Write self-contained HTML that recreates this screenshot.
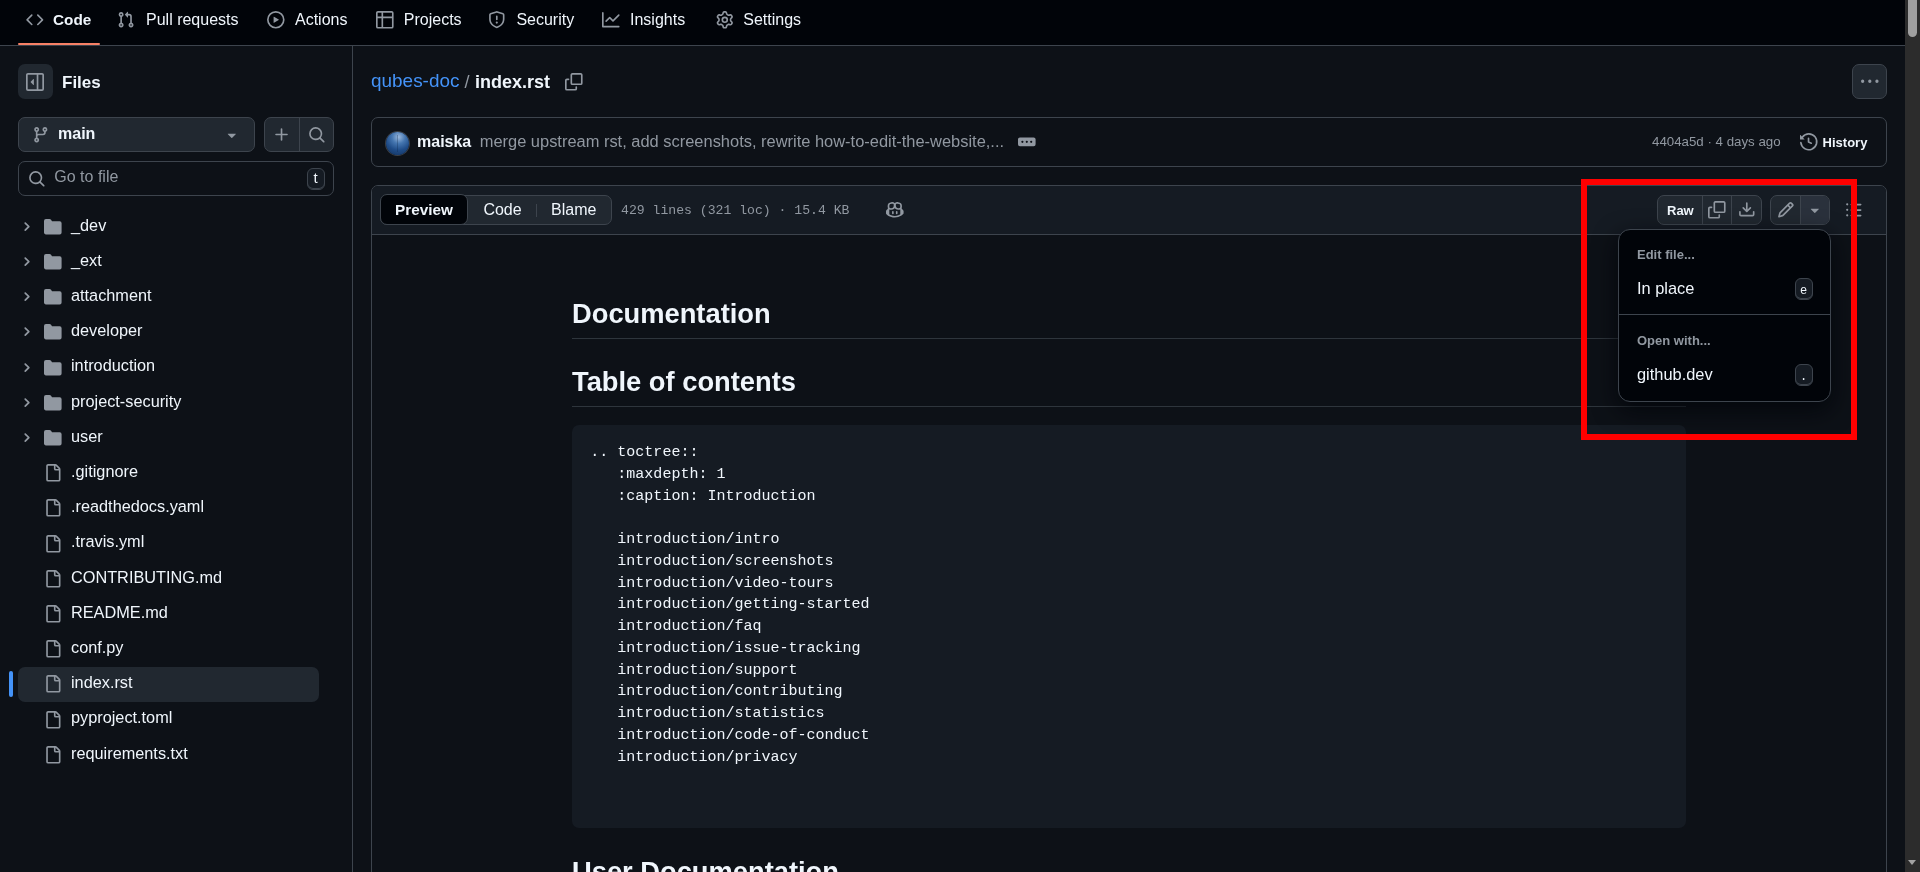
<!DOCTYPE html>
<html><head><meta charset="utf-8">
<style>
*{box-sizing:border-box;margin:0;padding:0}
html,body{width:1920px;height:872px;overflow:hidden;background:#0d1117;will-change:transform;font-family:"Liberation Sans",sans-serif;color:#f0f6fc}
.a{position:absolute}
.t{position:absolute;white-space:pre;line-height:1}
svg{position:absolute;fill:currentColor;overflow:visible}
.mono{font-family:"Liberation Mono",monospace}
#hdr{position:absolute;left:0;top:0;width:1905px;height:46px;background:#010409;border-bottom:1px solid #3d444d}
.nav{color:#f0f6fc;font-size:16px}
.ico{color:#9198a1}
.btn{position:absolute;background:#212830;border:1px solid #3d444d;border-radius:7px}
.sb{position:absolute;left:352px;top:46px;width:1px;height:826px;background:#3d444d}
.row .t{font-size:16px}
#scroll{position:absolute;left:1905px;top:0;width:15px;height:872px;background:#2c2c2c}
</style></head><body>
<div id="hdr">
  <svg class="ico" style="left:25.7px;top:10.6px" width="17.6" height="17.6" viewBox="0 0 16 16"><path d="M4.72 3.22a.75.75 0 0 1 1.06 1.06L2.06 8l3.72 3.72a.75.75 0 1 1-1.06 1.06L.47 8.53a.75.75 0 0 1 0-1.06Zm6.56 0a.75.75 0 1 0-1.06 1.06L13.94 8l-3.72 3.72a.75.75 0 1 0 1.06 1.06l4.25-4.25a.75.75 0 0 0 0-1.06Z"/></svg>
  <div class="t nav" style="left:53px;top:12.1px;font-size:15.3px;font-weight:700">Code</div>
  <div class="a" style="left:18px;top:43px;width:82px;height:2px;background:#f78166;border-radius:2px"></div>
  <svg class="ico" style="left:117px;top:10.6px" width="17.6" height="17.6" viewBox="0 0 16 16"><path d="M1.5 3.25a2.25 2.25 0 1 1 3 2.122v5.256a2.251 2.251 0 1 1-1.5 0V5.372A2.25 2.25 0 0 1 1.5 3.25Zm5.677-.177L9.573.677A.25.25 0 0 1 10 .854V2.5h1A2.5 2.5 0 0 1 13.5 5v5.628a2.251 2.251 0 1 1-1.5 0V5a1 1 0 0 0-1-1h-1v1.646a.25.25 0 0 1-.427.177L7.177 3.427a.25.25 0 0 1 0-.354ZM3.75 2.5a.75.75 0 1 0 0 1.5.75.75 0 0 0 0-1.5Zm0 9.5a.75.75 0 1 0 0 1.5.75.75 0 0 0 0-1.5Zm8.25.75a.75.75 0 1 0 1.5 0 .75.75 0 0 0-1.5 0Z"/></svg>
  <div class="t nav" style="left:146px;top:11.5px">Pull requests</div>
  <svg class="ico" style="left:266.7px;top:10.6px" width="17.6" height="17.6" viewBox="0 0 16 16"><path d="M8 0a8 8 0 1 1 0 16A8 8 0 0 1 8 0ZM1.5 8a6.5 6.5 0 1 0 13 0 6.5 6.5 0 0 0-13 0Zm4.879-2.773 4.264 2.559a.25.25 0 0 1 0 .428l-4.264 2.559A.25.25 0 0 1 6 10.559V5.442a.25.25 0 0 1 .379-.215Z"/></svg>
  <div class="t nav" style="left:295px;top:11.5px">Actions</div>
  <svg class="ico" style="left:375.8px;top:10.6px" width="17.6" height="17.6" viewBox="0 0 16 16"><path d="M0 1.75C0 .784.784 0 1.75 0h12.5C15.216 0 16 .784 16 1.75v12.5A1.75 1.75 0 0 1 14.25 16H1.75A1.75 1.75 0 0 1 0 14.25ZM6.5 6.5v8h7.75a.25.25 0 0 0 .25-.25V6.5Zm8-1.5V1.75a.25.25 0 0 0-.25-.25H6.5V5Zm-13 1.5v7.75c0 .138.112.25.25.25H5v-8ZM5 5V1.5H1.75a.25.25 0 0 0-.25.25V5Z"/></svg>
  <div class="t nav" style="left:403.8px;top:11.5px">Projects</div>
  <svg class="ico" style="left:488.3px;top:10.6px" width="17.6" height="17.6" viewBox="0 0 16 16"><path d="M7.467.133a1.748 1.748 0 0 1 1.066 0l5.25 1.68A1.75 1.75 0 0 1 15 3.48V7c0 1.566-.32 3.182-1.303 4.682-.983 1.498-2.585 2.813-5.032 3.855a1.697 1.697 0 0 1-1.33 0c-2.447-1.042-4.049-2.357-5.032-3.855C1.32 10.182 1 8.566 1 7V3.48a1.755 1.755 0 0 1 1.217-1.667Zm.61 1.429a.25.25 0 0 0-.153 0l-5.25 1.68a.25.25 0 0 0-.174.238V7c0 1.358.275 2.666 1.057 3.86.784 1.194 2.121 2.34 4.366 3.297a.196.196 0 0 0 .154 0c2.245-.956 3.582-2.104 4.366-3.298C13.225 9.666 13.5 8.36 13.5 7V3.48a.251.251 0 0 0-.174-.237l-5.25-1.68ZM8.75 4.75v3a.75.75 0 0 1-1.5 0v-3a.75.75 0 0 1 1.5 0ZM9 10.5a1 1 0 1 1-2 0 1 1 0 0 1 2 0Z"/></svg>
  <div class="t nav" style="left:516.4px;top:11.5px">Security</div>
  <svg class="ico" style="left:602px;top:10.6px" width="17.6" height="17.6" viewBox="0 0 16 16"><path d="M1.5 1.75V13.5h13.75a.75.75 0 0 1 0 1.5H.75a.75.75 0 0 1-.75-.75V1.75a.75.75 0 0 1 1.5 0Zm14.28 2.53-5.25 5.25a.75.75 0 0 1-1.06 0L7 7.06 4.28 9.78a.751.751 0 0 1-1.042-.018.751.751 0 0 1-.018-1.042l3.25-3.25a.75.75 0 0 1 1.06 0L10 7.94l4.72-4.72a.751.751 0 0 1 1.042.018.751.751 0 0 1 .018 1.042Z"/></svg>
  <div class="t nav" style="left:630px;top:11.5px">Insights</div>
  <svg class="ico" style="left:715.6px;top:10.6px" width="17.6" height="17.6" viewBox="0 0 16 16"><path d="M8 0a8.2 8.2 0 0 1 .701.031C9.444.095 9.99.645 10.16 1.29l.288 1.107c.018.066.079.158.212.224.231.114.454.243.668.386.123.082.233.09.299.071l1.103-.303c.644-.176 1.392.021 1.82.63.27.385.506.792.704 1.218.315.675.111 1.422-.364 1.891l-.814.806c-.049.048-.098.147-.088.294.016.257.016.515 0 .772-.01.147.038.246.088.294l.814.806c.475.469.679 1.216.364 1.891a7.977 7.977 0 0 1-.704 1.217c-.428.61-1.176.807-1.82.63l-1.102-.302c-.067-.019-.177-.011-.3.071a5.909 5.909 0 0 1-.668.386c-.133.066-.194.158-.211.224l-.29 1.106c-.168.646-.715 1.196-1.458 1.26a8.006 8.006 0 0 1-1.402 0c-.743-.064-1.289-.614-1.458-1.26l-.289-1.106c-.018-.066-.079-.158-.212-.224a5.738 5.738 0 0 1-.668-.386c-.123-.082-.233-.09-.299-.071l-1.103.303c-.644.176-1.392-.021-1.820-.630a8.12 8.12 0 0 1-.704-1.218c-.315-.675-.111-1.422.363-1.891l.815-.806c.05-.048.098-.147.088-.294a6.214 6.214 0 0 1 0-.772c.01-.147-.038-.246-.088-.294l-.815-.806C.635 6.045.431 5.298.746 4.623a7.92 7.92 0 0 1 .704-1.217c.428-.61 1.176-.807 1.820-.630l1.102.302c.067.019.177.011.3-.071.214-.143.437-.272.668-.386.133-.066.194-.158.211-.224l.29-1.106C6.009.645 6.556.095 7.299.03 7.53.01 7.764 0 8 0Zm-.571 1.525c-.036.003-.108.036-.137.146l-.289 1.105c-.147.561-.549.967-.998 1.189-.173.086-.34.183-.5.29-.417.278-.97.423-1.529.27l-1.103-.303c-.109-.03-.175.016-.195.045-.22.312-.412.644-.573.99-.014.031-.021.11.059.19l.815.806c.411.406.562.957.53 1.456a4.709 4.709 0 0 0 0 .582c.032.499-.119 1.05-.53 1.456l-.815.806c-.081.08-.073.159-.059.19.162.346.353.677.573.989.02.03.085.076.195.046l1.102-.303c.56-.153 1.113-.008 1.530.270.161.107.328.204.501.29.447.222.85.629.997 1.189l.289 1.105c.029.109.101.143.137.146a6.6 6.6 0 0 0 1.142 0c.036-.003.108-.036.137-.146l.289-1.105c.147-.561.549-.967.998-1.189.173-.086.34-.183.5-.29.417-.278.97-.423 1.529-.27l1.103.303c.109.029.175-.016.195-.045.22-.313.411-.644.573-.99.014-.031.021-.11-.059-.19l-.815-.806c-.411-.406-.562-.957-.53-1.456a4.709 4.709 0 0 0 0-.582c-.032-.499.119-1.05.53-1.456l.815-.806c.081-.08.073-.159.059-.19a6.464 6.464 0 0 0-.573-.989c-.02-.03-.085-.076-.195-.046l-1.102.303c-.56.153-1.113.008-1.530-.270a4.44 4.44 0 0 0-.501-.29c-.447-.222-.85-.629-.997-1.189l-.289-1.105c-.029-.11-.101-.143-.137-.146a6.6 6.6 0 0 0-1.142 0ZM11 8a3 3 0 1 1-6 0 3 3 0 0 1 6 0ZM9.5 8a1.5 1.5 0 1 0-3.001.001A1.5 1.5 0 0 0 9.5 8Z"/></svg>
  <div class="t nav" style="left:743.3px;top:11.5px">Settings</div>
</div>
<div class="sb"></div>
<!--SIDEBAR-->
<div class="a" style="left:18px;top:64px;width:35px;height:35px;background:#212830;border-radius:7px"></div>
<svg class="ico" style="left:26px;top:72.6px" width="18" height="18" viewBox="0 0 16 16"><path d="M4.177 7.823l2.396-2.396A.25.25 0 0 1 7 5.604v4.792a.25.25 0 0 1-.427.177L4.177 8.177a.25.25 0 0 1 0-.354Z M1.75 0h12.5C15.216 0 16 .784 16 1.75v12.5A1.75 1.75 0 0 1 14.25 16H1.75A1.75 1.75 0 0 1 0 14.25V1.75C0 .784.784 0 1.75 0ZM1.5 1.75v12.5c0 .138.112.25.25.25H9.5v-13H1.75a.25.25 0 0 0-.25.25ZM11 14.5h3.25a.25.25 0 0 0 .25-.25V1.75a.25.25 0 0 0-.25-.25H11Z"/></svg>
<div class="t" style="left:62px;top:74.1px;font-size:17px;font-weight:700">Files</div>
<div class="btn" style="left:18px;top:117px;width:237px;height:35px"></div>
<svg class="ico" style="left:31.6px;top:125.8px" width="17.6" height="17.6" viewBox="0 0 16 16"><path d="M9.5 3.25a2.25 2.25 0 1 1 3 2.122V6A2.5 2.5 0 0 1 10 8.5H6a1 1 0 0 0-1 1v1.128a2.251 2.251 0 1 1-1.5 0V5.372a2.25 2.25 0 1 1 1.5 0v1.836A2.493 2.493 0 0 1 6 7h4a1 1 0 0 0 1-1v-.628A2.25 2.25 0 0 1 9.5 3.25Zm-6 0a.75.75 0 1 0 1.5 0 .75.75 0 0 0-1.5 0Zm8.25-.75a.75.75 0 1 0 0 1.5.75.75 0 0 0 0-1.5ZM4.25 12a.75.75 0 1 0 0 1.5.75.75 0 0 0 0-1.5Z"/></svg>
<div class="t" style="left:58px;top:125.5px;font-size:16px;font-weight:700">main</div>
<svg class="ico" style="left:222.8px;top:125.8px" width="17.6" height="17.6" viewBox="0 0 16 16"><path d="m4.427 7.427 3.396 3.396a.25.25 0 0 0 .354 0l3.396-3.396A.25.25 0 0 0 11.396 7H4.604a.25.25 0 0 0-.177.427Z"/></svg>
<div class="btn" style="left:264px;top:117px;width:70px;height:35px"></div>
<div class="a" style="left:299px;top:118px;width:1px;height:33px;background:#3d444d"></div>
<svg class="ico" style="left:273px;top:125.8px" width="17.6" height="17.6" viewBox="0 0 16 16"><path d="M7.75 2a.75.75 0 0 1 .75.75V7h4.25a.75.75 0 0 1 0 1.5H8.5v4.25a.75.75 0 0 1-1.5 0V8.5H2.75a.75.75 0 0 1 0-1.5H7V2.75A.75.75 0 0 1 7.75 2Z"/></svg>
<svg class="ico" style="left:308.4px;top:125.8px" width="17.6" height="17.6" viewBox="0 0 16 16"><path d="M10.68 11.74a6 6 0 0 1-7.922-8.982 6 6 0 0 1 8.982 7.922l3.04 3.04a.749.749 0 0 1-.326 1.275.749.749 0 0 1-.734-.215ZM11.5 7a4.499 4.499 0 1 0-8.997 0A4.499 4.499 0 0 0 11.5 7Z"/></svg>
<div class="a" style="left:18px;top:161px;width:316px;height:35px;border:1px solid #3d444d;border-radius:7px;background:#0d1117"></div>
<svg class="ico" style="left:27.6px;top:170px" width="17.6" height="17.6" viewBox="0 0 16 16"><path d="M10.68 11.74a6 6 0 0 1-7.922-8.982 6 6 0 0 1 8.982 7.922l3.04 3.04a.749.749 0 0 1-.326 1.275.749.749 0 0 1-.734-.215ZM11.5 7a4.499 4.499 0 1 0-8.997 0A4.499 4.499 0 0 0 11.5 7Z"/></svg>
<div class="t" style="left:54.3px;top:169px;font-size:16px;color:#9198a1">Go to file</div>
<div class="a" style="left:307px;top:168px;width:18px;height:22px;border:1px solid #3d444d;border-radius:6px;background:#151b23;box-shadow:inset 0 -1px 0 #3d444d"></div>
<div class="t" style="left:313.6px;top:170.3px;font-size:15px;color:#f0f6fc">t</div>

<svg class="ico" style="left:19.6px;top:219.8px" width="13.2" height="13.2" viewBox="0 0 12 12"><path d="M4.7 10c-.2 0-.4-.1-.5-.2-.3-.3-.3-.8 0-1.1L6.9 6 4.2 3.3c-.3-.3-.3-.8 0-1.1.3-.3.8-.3 1.1 0l3.3 3.2c.3.3.3.8 0 1.1L5.3 9.7c-.2.2-.4.3-.6.3Z"/></svg>
<svg class="ico" style="left:44px;top:217.8px" width="17.6" height="17.6" viewBox="0 0 16 16"><path d="M1.75 1A1.75 1.75 0 0 0 0 2.75v10.5C0 14.216.784 15 1.75 15h12.5A1.75 1.75 0 0 0 16 13.25v-8.5A1.75 1.75 0 0 0 14.25 3H7.5a.25.25 0 0 1-.2-.1l-.9-1.2C6.07 1.26 5.55 1 5 1H1.75Z"/></svg>
<div class="t" style="left:71px;top:216.6px;font-size:16.3px">_dev</div>
<svg class="ico" style="left:19.6px;top:255.0px" width="13.2" height="13.2" viewBox="0 0 12 12"><path d="M4.7 10c-.2 0-.4-.1-.5-.2-.3-.3-.3-.8 0-1.1L6.9 6 4.2 3.3c-.3-.3-.3-.8 0-1.1.3-.3.8-.3 1.1 0l3.3 3.2c.3.3.3.8 0 1.1L5.3 9.7c-.2.2-.4.3-.6.3Z"/></svg>
<svg class="ico" style="left:44px;top:253.0px" width="17.6" height="17.6" viewBox="0 0 16 16"><path d="M1.75 1A1.75 1.75 0 0 0 0 2.75v10.5C0 14.216.784 15 1.75 15h12.5A1.75 1.75 0 0 0 16 13.25v-8.5A1.75 1.75 0 0 0 14.25 3H7.5a.25.25 0 0 1-.2-.1l-.9-1.2C6.07 1.26 5.55 1 5 1H1.75Z"/></svg>
<div class="t" style="left:71px;top:251.8px;font-size:16.3px">_ext</div>
<svg class="ico" style="left:19.6px;top:290.2px" width="13.2" height="13.2" viewBox="0 0 12 12"><path d="M4.7 10c-.2 0-.4-.1-.5-.2-.3-.3-.3-.8 0-1.1L6.9 6 4.2 3.3c-.3-.3-.3-.8 0-1.1.3-.3.8-.3 1.1 0l3.3 3.2c.3.3.3.8 0 1.1L5.3 9.7c-.2.2-.4.3-.6.3Z"/></svg>
<svg class="ico" style="left:44px;top:288.2px" width="17.6" height="17.6" viewBox="0 0 16 16"><path d="M1.75 1A1.75 1.75 0 0 0 0 2.75v10.5C0 14.216.784 15 1.75 15h12.5A1.75 1.75 0 0 0 16 13.25v-8.5A1.75 1.75 0 0 0 14.25 3H7.5a.25.25 0 0 1-.2-.1l-.9-1.2C6.07 1.26 5.55 1 5 1H1.75Z"/></svg>
<div class="t" style="left:71px;top:287.0px;font-size:16.3px">attachment</div>
<svg class="ico" style="left:19.6px;top:325.4px" width="13.2" height="13.2" viewBox="0 0 12 12"><path d="M4.7 10c-.2 0-.4-.1-.5-.2-.3-.3-.3-.8 0-1.1L6.9 6 4.2 3.3c-.3-.3-.3-.8 0-1.1.3-.3.8-.3 1.1 0l3.3 3.2c.3.3.3.8 0 1.1L5.3 9.7c-.2.2-.4.3-.6.3Z"/></svg>
<svg class="ico" style="left:44px;top:323.4px" width="17.6" height="17.6" viewBox="0 0 16 16"><path d="M1.75 1A1.75 1.75 0 0 0 0 2.75v10.5C0 14.216.784 15 1.75 15h12.5A1.75 1.75 0 0 0 16 13.25v-8.5A1.75 1.75 0 0 0 14.25 3H7.5a.25.25 0 0 1-.2-.1l-.9-1.2C6.07 1.26 5.55 1 5 1H1.75Z"/></svg>
<div class="t" style="left:71px;top:322.2px;font-size:16.3px">developer</div>
<svg class="ico" style="left:19.6px;top:360.6px" width="13.2" height="13.2" viewBox="0 0 12 12"><path d="M4.7 10c-.2 0-.4-.1-.5-.2-.3-.3-.3-.8 0-1.1L6.9 6 4.2 3.3c-.3-.3-.3-.8 0-1.1.3-.3.8-.3 1.1 0l3.3 3.2c.3.3.3.8 0 1.1L5.3 9.7c-.2.2-.4.3-.6.3Z"/></svg>
<svg class="ico" style="left:44px;top:358.6px" width="17.6" height="17.6" viewBox="0 0 16 16"><path d="M1.75 1A1.75 1.75 0 0 0 0 2.75v10.5C0 14.216.784 15 1.75 15h12.5A1.75 1.75 0 0 0 16 13.25v-8.5A1.75 1.75 0 0 0 14.25 3H7.5a.25.25 0 0 1-.2-.1l-.9-1.2C6.07 1.26 5.55 1 5 1H1.75Z"/></svg>
<div class="t" style="left:71px;top:357.4px;font-size:16.3px">introduction</div>
<svg class="ico" style="left:19.6px;top:395.8px" width="13.2" height="13.2" viewBox="0 0 12 12"><path d="M4.7 10c-.2 0-.4-.1-.5-.2-.3-.3-.3-.8 0-1.1L6.9 6 4.2 3.3c-.3-.3-.3-.8 0-1.1.3-.3.8-.3 1.1 0l3.3 3.2c.3.3.3.8 0 1.1L5.3 9.7c-.2.2-.4.3-.6.3Z"/></svg>
<svg class="ico" style="left:44px;top:393.8px" width="17.6" height="17.6" viewBox="0 0 16 16"><path d="M1.75 1A1.75 1.75 0 0 0 0 2.75v10.5C0 14.216.784 15 1.75 15h12.5A1.75 1.75 0 0 0 16 13.25v-8.5A1.75 1.75 0 0 0 14.25 3H7.5a.25.25 0 0 1-.2-.1l-.9-1.2C6.07 1.26 5.55 1 5 1H1.75Z"/></svg>
<div class="t" style="left:71px;top:392.6px;font-size:16.3px">project-security</div>
<svg class="ico" style="left:19.6px;top:431.0px" width="13.2" height="13.2" viewBox="0 0 12 12"><path d="M4.7 10c-.2 0-.4-.1-.5-.2-.3-.3-.3-.8 0-1.1L6.9 6 4.2 3.3c-.3-.3-.3-.8 0-1.1.3-.3.8-.3 1.1 0l3.3 3.2c.3.3.3.8 0 1.1L5.3 9.7c-.2.2-.4.3-.6.3Z"/></svg>
<svg class="ico" style="left:44px;top:429.0px" width="17.6" height="17.6" viewBox="0 0 16 16"><path d="M1.75 1A1.75 1.75 0 0 0 0 2.75v10.5C0 14.216.784 15 1.75 15h12.5A1.75 1.75 0 0 0 16 13.25v-8.5A1.75 1.75 0 0 0 14.25 3H7.5a.25.25 0 0 1-.2-.1l-.9-1.2C6.07 1.26 5.55 1 5 1H1.75Z"/></svg>
<div class="t" style="left:71px;top:427.8px;font-size:16.3px">user</div>
<svg class="ico" style="left:43.8px;top:464.2px" width="17.6" height="17.6" viewBox="0 0 16 16"><path d="M2 1.75C2 .784 2.784 0 3.75 0h6.586c.464 0 .909.184 1.237.513l2.914 2.914c.329.328.513.773.513 1.237v9.586A1.75 1.75 0 0 1 13.25 16h-9.5A1.75 1.75 0 0 1 2 14.25Zm1.75-.25a.25.25 0 0 0-.25.25v12.5c0 .138.112.25.25.25h9.5a.25.25 0 0 0 .25-.25V6h-2.75A1.75 1.75 0 0 1 9 4.25V1.5Zm6.75.062V4.25c0 .138.112.25.25.25h2.688l-.011-.013-2.914-2.914-.013-.011Z"/></svg>
<div class="t" style="left:71px;top:463.0px;font-size:16.3px">.gitignore</div>
<svg class="ico" style="left:43.8px;top:499.4px" width="17.6" height="17.6" viewBox="0 0 16 16"><path d="M2 1.75C2 .784 2.784 0 3.75 0h6.586c.464 0 .909.184 1.237.513l2.914 2.914c.329.328.513.773.513 1.237v9.586A1.75 1.75 0 0 1 13.25 16h-9.5A1.75 1.75 0 0 1 2 14.25Zm1.75-.25a.25.25 0 0 0-.25.25v12.5c0 .138.112.25.25.25h9.5a.25.25 0 0 0 .25-.25V6h-2.75A1.75 1.75 0 0 1 9 4.25V1.5Zm6.75.062V4.25c0 .138.112.25.25.25h2.688l-.011-.013-2.914-2.914-.013-.011Z"/></svg>
<div class="t" style="left:71px;top:498.2px;font-size:16.3px">.readthedocs.yaml</div>
<svg class="ico" style="left:43.8px;top:534.6px" width="17.6" height="17.6" viewBox="0 0 16 16"><path d="M2 1.75C2 .784 2.784 0 3.75 0h6.586c.464 0 .909.184 1.237.513l2.914 2.914c.329.328.513.773.513 1.237v9.586A1.75 1.75 0 0 1 13.25 16h-9.5A1.75 1.75 0 0 1 2 14.25Zm1.75-.25a.25.25 0 0 0-.25.25v12.5c0 .138.112.25.25.25h9.5a.25.25 0 0 0 .25-.25V6h-2.75A1.75 1.75 0 0 1 9 4.25V1.5Zm6.75.062V4.25c0 .138.112.25.25.25h2.688l-.011-.013-2.914-2.914-.013-.011Z"/></svg>
<div class="t" style="left:71px;top:533.4px;font-size:16.3px">.travis.yml</div>
<svg class="ico" style="left:43.8px;top:569.8px" width="17.6" height="17.6" viewBox="0 0 16 16"><path d="M2 1.75C2 .784 2.784 0 3.75 0h6.586c.464 0 .909.184 1.237.513l2.914 2.914c.329.328.513.773.513 1.237v9.586A1.75 1.75 0 0 1 13.25 16h-9.5A1.75 1.75 0 0 1 2 14.25Zm1.75-.25a.25.25 0 0 0-.25.25v12.5c0 .138.112.25.25.25h9.5a.25.25 0 0 0 .25-.25V6h-2.75A1.75 1.75 0 0 1 9 4.25V1.5Zm6.75.062V4.25c0 .138.112.25.25.25h2.688l-.011-.013-2.914-2.914-.013-.011Z"/></svg>
<div class="t" style="left:71px;top:568.6px;font-size:16.3px">CONTRIBUTING.md</div>
<svg class="ico" style="left:43.8px;top:605.0px" width="17.6" height="17.6" viewBox="0 0 16 16"><path d="M2 1.75C2 .784 2.784 0 3.75 0h6.586c.464 0 .909.184 1.237.513l2.914 2.914c.329.328.513.773.513 1.237v9.586A1.75 1.75 0 0 1 13.25 16h-9.5A1.75 1.75 0 0 1 2 14.25Zm1.75-.25a.25.25 0 0 0-.25.25v12.5c0 .138.112.25.25.25h9.5a.25.25 0 0 0 .25-.25V6h-2.75A1.75 1.75 0 0 1 9 4.25V1.5Zm6.75.062V4.25c0 .138.112.25.25.25h2.688l-.011-.013-2.914-2.914-.013-.011Z"/></svg>
<div class="t" style="left:71px;top:603.8px;font-size:16.3px">README.md</div>
<svg class="ico" style="left:43.8px;top:640.2px" width="17.6" height="17.6" viewBox="0 0 16 16"><path d="M2 1.75C2 .784 2.784 0 3.75 0h6.586c.464 0 .909.184 1.237.513l2.914 2.914c.329.328.513.773.513 1.237v9.586A1.75 1.75 0 0 1 13.25 16h-9.5A1.75 1.75 0 0 1 2 14.25Zm1.75-.25a.25.25 0 0 0-.25.25v12.5c0 .138.112.25.25.25h9.5a.25.25 0 0 0 .25-.25V6h-2.75A1.75 1.75 0 0 1 9 4.25V1.5Zm6.75.062V4.25c0 .138.112.25.25.25h2.688l-.011-.013-2.914-2.914-.013-.011Z"/></svg>
<div class="t" style="left:71px;top:639.0px;font-size:16.3px">conf.py</div>
<div class="a" style="left:18px;top:666.6px;width:301px;height:35px;background:#212830;border-radius:7px"></div>
<div class="a" style="left:9px;top:671.0px;width:4px;height:25.6px;background:#4493f8;border-radius:2px"></div>
<svg class="ico" style="left:43.8px;top:675.4px" width="17.6" height="17.6" viewBox="0 0 16 16"><path d="M2 1.75C2 .784 2.784 0 3.75 0h6.586c.464 0 .909.184 1.237.513l2.914 2.914c.329.328.513.773.513 1.237v9.586A1.75 1.75 0 0 1 13.25 16h-9.5A1.75 1.75 0 0 1 2 14.25Zm1.75-.25a.25.25 0 0 0-.25.25v12.5c0 .138.112.25.25.25h9.5a.25.25 0 0 0 .25-.25V6h-2.75A1.75 1.75 0 0 1 9 4.25V1.5Zm6.75.062V4.25c0 .138.112.25.25.25h2.688l-.011-.013-2.914-2.914-.013-.011Z"/></svg>
<div class="t" style="left:71px;top:674.2px;font-size:16.3px">index.rst</div>
<svg class="ico" style="left:43.8px;top:710.6px" width="17.6" height="17.6" viewBox="0 0 16 16"><path d="M2 1.75C2 .784 2.784 0 3.75 0h6.586c.464 0 .909.184 1.237.513l2.914 2.914c.329.328.513.773.513 1.237v9.586A1.75 1.75 0 0 1 13.25 16h-9.5A1.75 1.75 0 0 1 2 14.25Zm1.75-.25a.25.25 0 0 0-.25.25v12.5c0 .138.112.25.25.25h9.5a.25.25 0 0 0 .25-.25V6h-2.75A1.75 1.75 0 0 1 9 4.25V1.5Zm6.75.062V4.25c0 .138.112.25.25.25h2.688l-.011-.013-2.914-2.914-.013-.011Z"/></svg>
<div class="t" style="left:71px;top:709.4px;font-size:16.3px">pyproject.toml</div>
<svg class="ico" style="left:43.8px;top:745.8px" width="17.6" height="17.6" viewBox="0 0 16 16"><path d="M2 1.75C2 .784 2.784 0 3.75 0h6.586c.464 0 .909.184 1.237.513l2.914 2.914c.329.328.513.773.513 1.237v9.586A1.75 1.75 0 0 1 13.25 16h-9.5A1.75 1.75 0 0 1 2 14.25Zm1.75-.25a.25.25 0 0 0-.25.25v12.5c0 .138.112.25.25.25h9.5a.25.25 0 0 0 .25-.25V6h-2.75A1.75 1.75 0 0 1 9 4.25V1.5Zm6.75.062V4.25c0 .138.112.25.25.25h2.688l-.011-.013-2.914-2.914-.013-.011Z"/></svg>
<div class="t" style="left:71px;top:744.6px;font-size:16.3px">requirements.txt</div>
<!--/SIDEBAR-->
<!--MAIN-->
<!-- breadcrumb -->
<div class="t" style="left:371px;top:72.1px;font-size:18.95px;color:#4493f8">qubes-doc</div>
<div class="t" style="left:464.4px;top:72.5px;font-size:18px;color:#9198a1">/</div>
<div class="t" style="left:475px;top:72.8px;font-size:18px;font-weight:700">index.rst</div>
<svg class="ico" style="left:565px;top:72.9px" width="17.6" height="17.6" viewBox="0 0 16 16"><path d="M0 6.75C0 5.784.784 5 1.75 5h1.5a.75.75 0 0 1 0 1.5h-1.5a.25.25 0 0 0-.25.25v7.5c0 .138.112.25.25.25h7.5a.25.25 0 0 0 .25-.25v-1.5a.75.75 0 0 1 1.5 0v1.5A1.75 1.75 0 0 1 9.25 16h-7.5A1.75 1.75 0 0 1 0 14.25Z M5 1.75C5 .784 5.784 0 6.75 0h7.5C15.216 0 16 .784 16 1.75v7.5A1.75 1.75 0 0 1 14.25 11h-7.5A1.75 1.75 0 0 1 5 9.25Zm1.75-.25a.25.25 0 0 0-.25.25v7.5c0 .138.112.25.25.25h7.5a.25.25 0 0 0 .25-.25v-7.5a.25.25 0 0 0-.25-.25Z"/></svg>
<div class="btn" style="left:1852px;top:64px;width:35px;height:35px"></div>
<svg class="ico" style="left:1860.7px;top:72.7px" width="17.6" height="17.6" viewBox="0 0 16 16"><path d="M8 9a1.5 1.5 0 1 0 0-3 1.5 1.5 0 0 0 0 3ZM1.5 9a1.5 1.5 0 1 0 0-3 1.5 1.5 0 0 0 0 3Zm13 0a1.5 1.5 0 1 0 0-3 1.5 1.5 0 0 0 0 3Z"/></svg>
<!-- commit box -->
<div class="a" style="left:371px;top:117px;width:1516px;height:50px;border:1px solid #3d444d;border-radius:7px"></div>
<div class="a" style="left:385.8px;top:131.8px;width:22.8px;height:22.8px;border-radius:50%;background:radial-gradient(circle at 55% 22%,#9ab8dc 0%,#4576b0 30%,#1f4c88 60%,#112f58 100%);box-shadow:0 0 0 1px #3a3f46"></div>
<div class="a" style="left:396.6px;top:135px;width:1.2px;height:17px;background:rgba(10,35,70,.3)"></div>
<div class="t" style="left:417px;top:134px;font-size:16px;font-weight:700">maiska</div>
<div class="t" style="left:479.7px;top:132.6px;font-size:16.45px;color:#9198a1">merge upstream rst, add screenshots, rewrite how-to-edit-the-website,...</div>
<svg class="ico" style="left:1018px;top:132.8px" width="17.6" height="17.6" viewBox="0 0 16 16"><path d="M0 5.75C0 4.784.784 4 1.75 4h12.5c.966 0 1.75.784 1.75 1.75v4.5A1.75 1.75 0 0 1 14.25 12H1.75A1.75 1.75 0 0 1 0 10.25ZM12 7a1 1 0 1 0 0 2 1 1 0 0 0 0-2ZM7 8a1 1 0 1 0 2 0 1 1 0 0 0-2 0ZM4 7a1 1 0 1 0 0 2 1 1 0 0 0 0-2Z"/></svg>
<div class="t" style="left:1652px;top:134.5px;font-size:13.3px;color:#9198a1">4404a5d · 4 days ago</div>
<svg class="ico" style="left:1799.9px;top:132.9px" width="17.6" height="17.6" viewBox="0 0 16 16"><path d="m.427 1.927 1.215 1.215a8.002 8.002 0 1 1-1.6 5.685.75.75 0 1 1 1.493-.154 6.5 6.5 0 1 0 1.18-4.458l1.358 1.358A.25.25 0 0 1 3.896 6H.25A.25.25 0 0 1 0 5.75V2.104a.25.25 0 0 1 .427-.177ZM7.75 4a.75.75 0 0 1 .75.75v2.992l2.028.812a.75.75 0 0 1-.557 1.392l-2.5-1A.751.751 0 0 1 7 8.25v-3.5A.75.75 0 0 1 7.75 4Z"/></svg>
<div class="t" style="left:1822.6px;top:135.5px;font-size:13px;font-weight:700">History</div>
<!-- file box -->
<div class="a" style="left:371px;top:185px;width:1516px;height:720px;border:1px solid #3d444d;border-radius:7px;overflow:hidden">
  <div class="a" style="left:0;top:0;width:1514px;height:49px;background:#151b23;border-bottom:1px solid #3d444d"></div>
</div>
<div class="btn" style="left:380px;top:195px;width:232px;height:30px"></div>
<div class="a" style="left:380px;top:194.2px;width:88px;height:30.8px;background:#010409;border:1px solid #3d444d;border-radius:7px"></div>
<div class="t" style="left:395px;top:201.5px;font-size:15.3px;font-weight:700">Preview</div>
<div class="t" style="left:483.4px;top:201.7px;font-size:16px">Code</div>
<div class="a" style="left:536px;top:203.5px;width:1px;height:13px;background:#3d444d"></div>
<div class="t" style="left:551px;top:201.7px;font-size:16px">Blame</div>
<div class="t mono" style="left:621px;top:203.6px;font-size:13.13px;color:#9198a1">429 lines (321 loc) · 15.4 KB</div>
<svg class="ico" style="left:886px;top:201px" width="17.6" height="17.6" viewBox="0 0 16 16"><path d="M7.998 15.035c-4.562 0-7.873-2.914-7.998-3.749V9.338c.085-.628.677-1.686 1.588-2.065.013-.07.024-.143.036-.218.029-.183.06-.384.126-.612-.201-.508-.254-1.084-.254-1.656 0-.87.128-1.769.693-2.484.579-.733 1.494-1.124 2.724-1.261 1.206-.134 2.262.034 2.944.765.05.053.096.108.139.165.044-.057.094-.112.143-.165.682-.731 1.738-.899 2.944-.765 1.23.137 2.145.528 2.724 1.261.566.715.693 1.614.693 2.484 0 .572-.053 1.148-.254 1.656.066.228.098.429.126.612.012.076.024.148.037.218.924.385 1.522 1.471 1.591 2.095v1.872c0 .766-3.351 3.795-8.002 3.795Zm0-1.485c2.28 0 4.584-1.11 5.002-1.433V7.862l-.023-.116c-.49.21-1.075.291-1.727.291-1.146 0-2.059-.327-2.71-.991A3.222 3.222 0 0 1 8 6.303a3.24 3.24 0 0 1-.544.743c-.65.664-1.563.991-2.71.991-.652 0-1.236-.081-1.727-.291l-.023.116v4.255c.419.323 2.722 1.433 5.002 1.433ZM6.762 2.83c-.193-.206-.637-.413-1.682-.297-1.019.113-1.479.404-1.713.7-.247.312-.369.789-.369 1.554 0 .793.129 1.171.308 1.371.162.181.519.379 1.442.379.853 0 1.339-.235 1.638-.54.315-.322.527-.827.617-1.553.117-.935-.037-1.395-.241-1.614Zm4.155-.297c-1.044-.116-1.488.091-1.681.297-.204.219-.359.679-.242 1.614.091.726.303 1.231.618 1.553.299.305.784.54 1.638.54.922 0 1.28-.198 1.442-.379.179-.2.308-.578.308-1.371 0-.765-.123-1.242-.37-1.554-.233-.296-.693-.587-1.713-.7Z M6.25 9.037a.75.75 0 0 1 .75.75v1.501a.75.75 0 0 1-1.5 0V9.787a.75.75 0 0 1 .75-.75Zm4.25.75v1.501a.75.75 0 0 1-1.5 0V9.787a.75.75 0 0 1 1.5 0Z"/></svg>
<!-- raw group -->
<div class="btn" style="left:1657px;top:195px;width:105px;height:30px"></div>
<div class="a" style="left:1702px;top:196px;width:1px;height:28px;background:#3d444d"></div>
<div class="a" style="left:1731px;top:196px;width:1px;height:28px;background:#3d444d"></div>
<div class="t" style="left:1667px;top:203.8px;font-size:13px;font-weight:700">Raw</div>
<svg class="ico" style="left:1708px;top:201px" width="17.6" height="17.6" viewBox="0 0 16 16"><path d="M0 6.75C0 5.784.784 5 1.75 5h1.5a.75.75 0 0 1 0 1.5h-1.5a.25.25 0 0 0-.25.25v7.5c0 .138.112.25.25.25h7.5a.25.25 0 0 0 .25-.25v-1.5a.75.75 0 0 1 1.5 0v1.5A1.75 1.75 0 0 1 9.25 16h-7.5A1.75 1.75 0 0 1 0 14.25Z M5 1.75C5 .784 5.784 0 6.75 0h7.5C15.216 0 16 .784 16 1.75v7.5A1.75 1.75 0 0 1 14.25 11h-7.5A1.75 1.75 0 0 1 5 9.25Zm1.75-.25a.25.25 0 0 0-.25.25v7.5c0 .138.112.25.25.25h7.5a.25.25 0 0 0 .25-.25v-7.5a.25.25 0 0 0-.25-.25Z"/></svg>
<svg class="ico" style="left:1737.7px;top:201.2px" width="17.6" height="17.6" viewBox="0 0 16 16"><path d="M2.75 14A1.75 1.75 0 0 1 1 12.25v-2.5a.75.75 0 0 1 1.5 0v2.5c0 .138.112.25.25.25h10.5a.25.25 0 0 0 .25-.25v-2.5a.75.75 0 0 1 1.5 0v2.5A1.75 1.75 0 0 1 13.25 14Z M7.25 7.689V2a.75.75 0 0 1 1.5 0v5.689l1.97-1.969a.749.749 0 1 1 1.06 1.06l-3.25 3.25a.749.749 0 0 1-1.06 0L4.22 6.78a.749.749 0 1 1 1.06-1.06l1.97 1.969Z"/></svg>
<!-- edit group -->
<div class="btn" style="left:1770px;top:195px;width:60px;height:30px;overflow:hidden"><div class="a" style="left:29px;top:0;width:31px;height:28px;background:#2a313c;border-left:1px solid #3d444d"></div></div>
<svg class="ico" style="left:1777px;top:201px" width="17.6" height="17.6" viewBox="0 0 16 16"><path d="M11.013 1.427a1.75 1.75 0 0 1 2.474 0l1.086 1.086a1.75 1.75 0 0 1 0 2.474l-8.61 8.61c-.21.21-.47.364-.756.445l-3.251.93a.75.75 0 0 1-.927-.928l.929-3.25c.081-.286.235-.547.445-.758l8.61-8.61Zm.176 4.823L9.75 4.81l-6.286 6.287a.253.253 0 0 0-.064.108l-.558 1.953 1.953-.558a.253.253 0 0 0 .108-.064Zm1.238-3.763a.25.25 0 0 0-.354 0L10.811 3.75l1.439 1.44 1.263-1.263a.25.25 0 0 0 0-.354Z"/></svg>
<svg class="ico" style="left:1806.1px;top:200.6px" width="17.6" height="17.6" viewBox="0 0 16 16"><path d="m4.427 7.427 3.396 3.396a.25.25 0 0 0 .354 0l3.396-3.396A.25.25 0 0 0 11.396 7H4.604a.25.25 0 0 0-.177.427Z"/></svg>
<svg class="ico" style="left:1844.7px;top:201px" width="17.6" height="17.6" viewBox="0 0 16 16"><path d="M5.75 2.5h8.5a.75.75 0 0 1 0 1.5h-8.5a.75.75 0 0 1 0-1.5Zm0 5h8.5a.75.75 0 0 1 0 1.5h-8.5a.75.75 0 0 1 0-1.5Zm0 5h8.5a.75.75 0 0 1 0 1.5h-8.5a.75.75 0 0 1 0-1.5ZM2 14a1 1 0 1 1 0-2 1 1 0 0 1 0 2Zm1-6a1 1 0 1 1-2 0 1 1 0 0 1 2 0ZM2 4a1 1 0 1 1 0-2 1 1 0 0 1 0 2Z"/></svg>
<!-- content -->
<div class="t" style="left:572px;top:299.7px;font-size:27.3px;font-weight:700">Documentation</div>
<div class="a" style="left:572px;top:338px;width:1114px;height:1px;background:#3d444db3"></div>
<div class="t" style="left:572px;top:367.5px;font-size:27.3px;font-weight:700">Table of contents</div>
<div class="a" style="left:572px;top:406px;width:1114px;height:1px;background:#3d444db3"></div>
<div class="a" style="left:572px;top:425px;width:1114px;height:403px;background:#151b23;border-radius:7px"></div>
<div class="t mono" id="code" style="left:590.3px;top:442px;font-size:15.02px;line-height:21.76px">.. toctree::
   :maxdepth: 1
   :caption: Introduction

   introduction/intro
   introduction/screenshots
   introduction/video-tours
   introduction/getting-started
   introduction/faq
   introduction/issue-tracking
   introduction/support
   introduction/contributing
   introduction/statistics
   introduction/code-of-conduct
   introduction/privacy</div>
<div class="t" style="left:572px;top:858px;font-size:27.3px;font-weight:700">User Documentation</div>
<!-- menu -->
<div class="a" style="left:1618px;top:229px;width:213px;height:173px;background:#010409;border:1px solid #3d444d;border-radius:12px;box-shadow:0 8px 24px rgba(1,4,9,.8)"></div>
<div class="t" style="left:1637px;top:248px;font-size:13px;font-weight:700;color:#9198a1">Edit file...</div>
<div class="t" style="left:1637px;top:279.7px;font-size:16.4px">In place</div>
<div class="a" style="left:1795px;top:278px;width:18px;height:21.5px;border:1px solid #3d444d;border-radius:6px;background:#151b23;box-shadow:inset 0 -1px 0 #3d444d"></div>
<div class="t mono" style="left:1800px;top:285px;font-size:12px">e</div>
<div class="a" style="left:1619px;top:314px;width:211px;height:1px;background:#3d444d"></div>
<div class="t" style="left:1637px;top:334px;font-size:13px;font-weight:700;color:#9198a1">Open with...</div>
<div class="t" style="left:1637px;top:366.4px;font-size:16.4px">github.dev</div>
<div class="a" style="left:1795px;top:364px;width:18px;height:21.5px;border:1px solid #3d444d;border-radius:6px;background:#151b23;box-shadow:inset 0 -1px 0 #3d444d"></div>
<div class="t mono" style="left:1800px;top:371px;font-size:12px">.</div>
<!-- red box -->
<div class="a" style="left:1581px;top:179px;width:276px;height:261px;border:6px solid #ff0000"></div>

<!--/MAIN-->
<div id="scroll"><div class="a" style="left:3px;top:0;width:9px;height:37px;background:#9f9f9f;border-radius:0 0 5px 5px"></div>
<div class="a" style="left:2.5px;top:860px;width:0;height:0;border-left:4.8px solid transparent;border-right:4.8px solid transparent;border-top:5px solid #a3a3a3"></div></div>
</body></html>
